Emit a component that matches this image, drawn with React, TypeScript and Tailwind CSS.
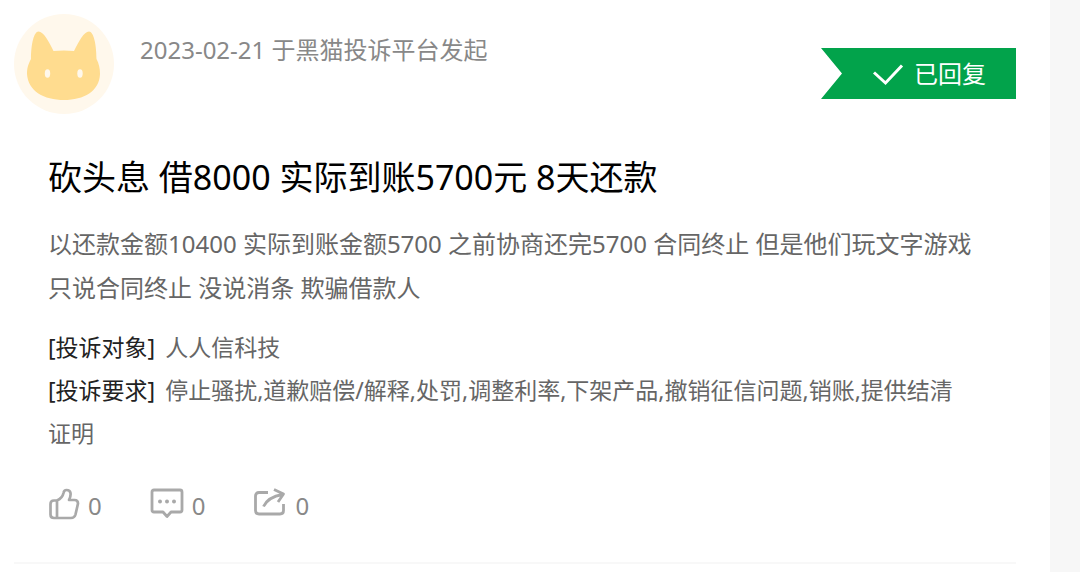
import type { ReactNode } from "react";

function CatAvatar() {
  return (
    <svg viewBox="0 0 100 100" className="h-25 w-25 shrink-0" role="img" aria-label="avatar">
      <circle cx="50" cy="50" r="50" fill="#fff8ec" />
      <path
        d="M24.500 17.500C20 17.500 17 30 17 45C14 51 13 54 13 60C14 77 30 86 50 86C70 86 85.500 77 86 60C86 54 85 50 82.500 45C82.500 30 79.500 17.500 75 17.500C70 17.500 65 27 60 37Q50 36 39.500 37C34.500 27 29.500 17.500 24.500 17.500Z"
        fill="#ffdc8f"
      />
      <ellipse cx="33.500" cy="59.500" rx="2.700" ry="4.200" fill="#fff8ec" />
      <ellipse cx="66" cy="59.500" rx="2.700" ry="4.200" fill="#fff8ec" />
    </svg>
  );
}

function ReplyBadge() {
  return (
    <div className="flex h-[51px] w-[195px] items-center gap-2.5 bg-[#02a34b] pl-[51px] text-2xl text-white [clip-path:polygon(0_0,100%_0,100%_100%,0_100%,21px_50%)]">
      <svg viewBox="0 0 32 24" className="h-6 w-8" fill="none" stroke="#fff" strokeWidth="3" aria-hidden="true">
        <path d="M2 10.500L13.500 21L30 3.500" />
      </svg>
      <span className="whitespace-nowrap">已回复</span>
    </div>
  );
}

function LikeIcon() {
  return (
    <svg viewBox="0 0 32 32" className="h-8 w-8" fill="none" stroke="#a9a9a9" strokeWidth="2.700" strokeLinejoin="round" aria-hidden="true">
      <path d="M9 12.500H6Q2.500 12.500 2.500 16V26.500Q2.500 30 6 30H23Q26.500 30 27.500 26.500L30 15.500Q30 12 26.500 12H21Q23 8 22.500 5Q22 2 18.500 2Q16 2 15.500 5Q14.500 10 9 12.500ZM9 12.500V30" />
    </svg>
  );
}

function CommentIcon() {
  return (
    <svg viewBox="0 0 34 32" className="h-8 w-[34px]" fill="none" stroke="#a9a9a9" strokeWidth="2.800" strokeLinejoin="round" aria-hidden="true">
      <path d="M4 2H30Q32 2 32 4V22Q32 24 30 24H21L17 28.500L13 24H4Q2 24 2 22V4Q2 2 4 2Z" />
      <g fill="#a9a9a9" stroke="none">
        <circle cx="10" cy="13.500" r="2" />
        <circle cx="17" cy="13.500" r="2" />
        <circle cx="24" cy="13.500" r="2" />
      </g>
    </svg>
  );
}

function ShareIcon() {
  return (
    <svg viewBox="0 0 34 32" className="h-8 w-[34px]" fill="none" stroke="#a9a9a9" strokeWidth="2.800" strokeLinejoin="round" aria-hidden="true">
      <path d="M15 4.500H6Q2.500 4.500 2.500 8V22.500Q2.500 26 6 26H27Q30.500 26 30.500 22.500V16" />
      <path d="M10.500 18.500Q15 9 29.500 6.500M21 1.500L30.500 6L25 14" />
    </svg>
  );
}

function Action({ label, children }: { label: string; children: ReactNode }) {
  return (
    <button type="button" aria-label={label} className="flex items-start gap-2 text-2xl leading-9 text-[#888888]">
      {children}
      <span>0</span>
    </button>
  );
}

export default function App() {
  return (
    <div className="min-h-screen bg-[#f7f7f7] pr-[30px] font-['Noto_Sans','Noto_Sans_CJK_SC',sans-serif]">
      <main className="min-h-screen bg-white pt-3.5 pr-[34px] pl-3.5">
        <article className="border-b-2 border-[#f8f8f8] pb-[38px]">
          <header className="flex items-start">
            <CatAvatar />
            <p className="ml-[26px] pt-3.5 text-2xl leading-[44px] text-[#888888]">2023-02-21 于黑猫投诉平台发起</p>
            <div className="ml-auto pt-[34px]">
              <ReplyBadge />
            </div>
          </header>
          <div className="pt-[39px] pl-[34px]">
            <h1 className="text-[34px] leading-[48px] text-black">砍头息 借8000 实际到账5700元 8天还款</h1>
            <p className="mt-[21px] text-2xl leading-[44px] text-[#666666]">
              以还款金额10400 实际到账金额5700 之前协商还完5700 合同终止 但是他们玩文字游戏
              <br />
              只说合同终止 没说消条 欺骗借款人
            </p>
            <ul className="mt-4 text-[23px] leading-[43px] text-[#666666]">
              <li>
                <span className="mr-2.5 text-[#222222]">[投诉对象]</span>人人信科技
              </li>
              <li>
                <span className="mr-2.5 text-[#222222]">[投诉要求]</span>停止骚扰,道歉赔偿/解释,处罚,调整利率,下架产品,撤销征信问题,销账,提供结清
                <br />
                证明
              </li>
            </ul>
            <div className="mt-[33px] flex gap-12">
              <Action label="点赞"><LikeIcon /></Action>
              <Action label="评论"><CommentIcon /></Action>
              <Action label="分享"><ShareIcon /></Action>
            </div>
          </div>
        </article>
      </main>
    </div>
  );
}
